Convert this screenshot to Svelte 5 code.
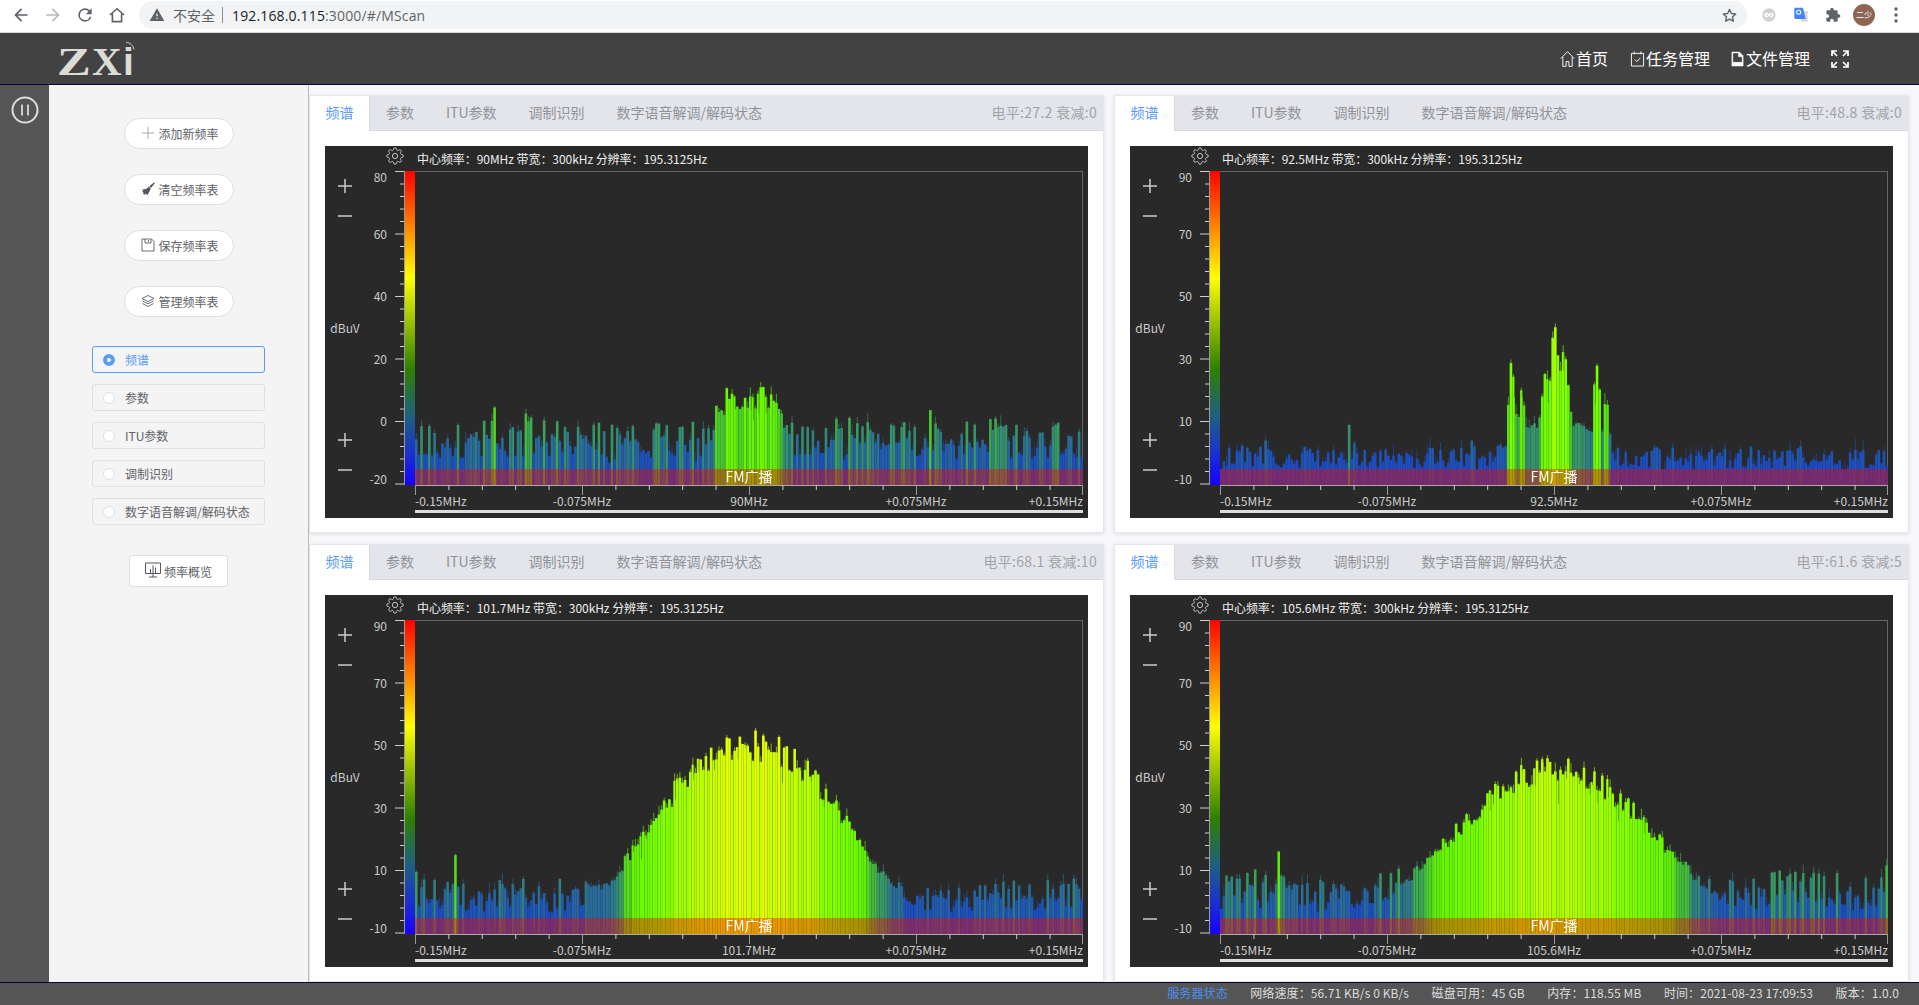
<script>
    const tabs = ["频谱", "参数", "ITU参数", "调制识别", "数字语音解调/解码状态"];

    // one entry per spectrum panel, x and h are in plot pixels
    const charts = [
        {
            center: "90MHz", level: "电平:27.2 衰减:0", info: "中心频率：90MHz 带宽：300kHz 分辨率：195.3125Hz",
            labels: [80, 60, 40, 20, 0, -20], seed: 11, noise: [20, 74], jitter: 0.74,
            peaks: [
                { x: 334, h: 98, w: 39, p: 6 },
                { x: 357, h: 104, w: 2, p: 2 },
                { x: 302, h: 100, w: 2, p: 2 }
            ]
        },
        {
            center: "92.5MHz", level: "电平:48.8 衰减:0", info: "中心频率：92.5MHz 带宽：300kHz 分辨率：195.3125Hz",
            labels: [90, 70, 50, 30, 10, -10], seed: 23, noise: [12, 42], jitter: 0.92,
            peaks: [
                { x: 335, h: 62, w: 62, p: 4 },
                { x: 292, h: 122, w: 6, p: 2 },
                { x: 302, h: 96, w: 6, p: 2 },
                { x: 335, h: 160, w: 8, p: 2 },
                { x: 327, h: 112, w: 11, p: 2 },
                { x: 343, h: 130, w: 11, p: 2 },
                { x: 377, h: 118, w: 6, p: 2 },
                { x: 386, h: 85, w: 6, p: 2 },
                { x: 129, h: 62, w: 1.5, p: 2 },
                { x: 253, h: 62, w: 2, p: 2 }
            ]
        },
        {
            center: "101.7MHz", level: "电平:68.1 衰减:10", info: "中心频率：101.7MHz 带宽：300kHz 分辨率：195.3125Hz",
            labels: [90, 70, 50, 30, 10, -10], seed: 37, noise: [16, 60], jitter: 0.88,
            peaks: [
                { x: 334, h: 196, w: 126, p: 2.4 },
                { x: 41, h: 101, w: 1.3, p: 2 },
                { x: 175, h: 96, w: 1.3, p: 2 },
                { x: 582, h: 95, w: 1.3, p: 2 }
            ]
        },
        {
            center: "105.6MHz", level: "电平:61.6 衰减:5", info: "中心频率：105.6MHz 带宽：300kHz 分辨率：195.3125Hz",
            labels: [90, 70, 50, 30, 10, -10], seed: 51, noise: [18, 70], jitter: 0.88,
            peaks: [
                { x: 334, h: 170, w: 138, p: 2.2 },
                { x: 59, h: 90, w: 1.3, p: 2 },
                { x: 600, h: 93, w: 1.3, p: 2 }
            ]
        }
    ];

    const status = [
        "网络速度：56.71 KB/s 0 KB/s",
        "磁盘可用：45 GB",
        "内存：118.55 MB",
        "时间：2021-08-23 17:09:53",
        "版本：1.0.0"
    ];

    const PLOT_W = 668;
    const PLOT_H = 314;

    const yTicks = Array.from({ length: 26 }, (_, i) => i);
    const xTicks = Array.from({ length: 21 }, (_, i) => i);

    function tickY(i) {
        return Math.min(0.5 + i * 12.5, PLOT_H - 0.5);
    }

    function labelY(i) {
        if (i == 0) return 5.5;
        if (i == 5) return PLOT_H - 7;
        return i * 62.5 - 0.5;
    }

    function tickX(i) {
        return Math.min(0.5 + i * 33.4, PLOT_W - 0.5);
    }

    function random(seed) {
        return function () {
            seed = (seed + 0x6d2b79f5) | 0;
            let t = Math.imul(seed ^ (seed >>> 15), 1 | seed);
            t = (t + Math.imul(t ^ (t >>> 7), 61 | t)) ^ t;
            return ((t ^ (t >>> 14)) >>> 0) / 4294967296;
        };
    }

    const ramp = [
        [0, 24, 66, 200],
        [32, 28, 78, 190],
        [50, 42, 110, 150],
        [72, 68, 190, 55],
        [85, 100, 245, 0],
        [120, 120, 255, 0],
        [150, 155, 255, 0],
        [190, 220, 255, 0],
        [206, 245, 255, 0],
        [260, 255, 180, 0]
    ];

    function colorFor(h, alpha) {
        let i = 0;
        while (i < ramp.length - 2 && h > ramp[i + 1][0]) i++;
        const a = ramp[i];
        const b = ramp[i + 1];
        const t = Math.min(1, Math.max(0, (h - a[0]) / (b[0] - a[0])));
        const c = [1, 2, 3].map((k) => Math.round(a[k] + (b[k] - a[k]) * t));
        return `rgba(${c[0]},${c[1]},${c[2]},${alpha})`;
    }

    function spectrum(canvas, chart) {
        const ctx = canvas.getContext("2d");
        const rnd = random(chart.seed);
        const bins = 256;
        const step = PLOT_W / bins;
        let slow = 0.5;

        for (let b = 0; b < bins; b++) {
            const x = b * step;
            slow = slow * 0.6 + rnd() * 0.4;
            const [lo, hi] = chart.noise;
            let h = lo + (hi - lo) * (0.3 * slow + 0.7 * Math.pow(rnd(), 1.2));
            if (rnd() < 0.07) h += (hi - lo) * 0.2;

            let floor = 0;
            for (const p of chart.peaks) {
                const e = p.h * Math.exp(-Math.pow(Math.abs(x + step / 2 - p.x) / p.w, p.p));
                if (e > floor) floor = e;
            }
            if (floor > h) h = Math.max(h, floor * (chart.jitter + rnd() * (1.04 - chart.jitter)));

            // peak hold sits above the live bar
            const peak = h + rnd() * rnd() * 12;
            ctx.fillStyle = colorFor(h, 0.6);
            ctx.fillRect(x + step * 0.3, PLOT_H - peak, step * 0.4, peak - h);
            ctx.fillStyle = colorFor(h, 1);
            ctx.fillRect(x, PLOT_H - h, step, h);

            if (h > 80 && rnd() < 0.2) {
                ctx.fillStyle = "rgba(20,50,10,0.55)";
                ctx.fillRect(x + step - 0.8, PLOT_H - h, 0.8, rnd() * 24);
            }
        }
    }
</script>

<div class="page">
    <div class="browser">
        <svg class="nav-ico" viewBox="0 0 24 24"><path fill="#5f6368" d="M20 11H7.8l5.6-5.6L12 4l-8 8 8 8 1.4-1.4L7.8 13H20z"/></svg>
        <svg class="nav-ico" viewBox="0 0 24 24"><path fill="#b8babd" d="M4 11h12.2l-5.6-5.6L12 4l8 8-8 8-1.4-1.4 5.6-5.6H4z"/></svg>
        <svg class="nav-ico" viewBox="0 0 24 24"><path fill="#5f6368" d="M17.65 6.35A7.96 7.96 0 0 0 12 4a8 8 0 1 0 7.74 10h-2.08A6 6 0 1 1 12 6c1.66 0 3.14.69 4.22 1.78L13 11h7V4z"/></svg>
        <svg class="nav-ico" viewBox="0 0 24 24"><path fill="none" stroke="#5f6368" stroke-width="2" d="M3.5 12 12 4.5l8.5 7.5M6.5 10.5V20h11v-9.5"/></svg>
        <div class="address">
            <svg class="warn" viewBox="0 0 24 24"><path fill="#5f6368" d="M1 21h22L12 2 1 21zm12-3h-2v-2h2v2zm0-4h-2v-4h2v4z"/></svg>
            <span class="insecure">不安全</span>
            <span class="sep"></span>
            <span class="url"><span class="host">192.168.0.115</span><span class="path">:3000/#/MScan</span></span>
            <svg class="star" viewBox="0 0 24 24"><path fill="none" stroke="#5f6368" stroke-width="2" stroke-linejoin="round" d="m12 3.5 2.6 5.6 6.1.7-4.5 4.2 1.2 6L12 17l-5.4 3 1.2-6-4.5-4.2 6.1-.7z"/></svg>
        </div>
        <div class="exts">
            <svg class="ext" viewBox="0 0 24 24"><circle cx="12" cy="12" r="10" fill="#d2d2d2"/><path fill="none" stroke="#fff" stroke-width="2" d="M12 12c-2-3-6-3-6 0s4 3 6 0 6-3 6 0-4 3-6 0z"/></svg>
            <svg class="ext" viewBox="0 0 24 24"><path fill="#d5d7d9" d="M10 6h12v16H12z"/><path fill="#4285f4" d="M2 1h13l4 17H4a2 2 0 0 1-2-2z"/><circle cx="8.5" cy="8" r="3" fill="none" stroke="#fff" stroke-width="1.6"/></svg>
            <svg class="ext" viewBox="0 0 24 24"><path fill="#5f6368" d="M20.5 11H19V7c0-1.1-.9-2-2-2h-4V3.5C13 2.12 11.88 1 10.5 1S8 2.12 8 3.5V5H4c-1.1 0-1.99.9-1.99 2v3.8H3.5c1.49 0 2.7 1.21 2.7 2.7s-1.21 2.7-2.7 2.7H2V20c0 1.1.9 2 2 2h3.8v-1.5c0-1.49 1.21-2.7 2.7-2.7 1.49 0 2.7 1.21 2.7 2.7V22H17c1.1 0 2-.9 2-2v-4h1.5c1.38 0 2.5-1.12 2.5-2.5S21.88 11 20.5 11z"/></svg>
            <span class="avatar">二少</span>
            <svg class="dots" viewBox="0 0 6 18"><circle cx="3" cy="3" r="1.7"/><circle cx="3" cy="9" r="1.7"/><circle cx="3" cy="15" r="1.7"/></svg>
        </div>
    </div>

    <header class="top">
        <div class="logo">
            <span class="z">Z</span><span class="x">X</span><span class="i">i</span>
            <svg class="wave" viewBox="0 0 12 10"><path fill="none" stroke="#ccc" stroke-width="1" d="M2 1.5c4 0 7 2.500 8 7"/></svg>
        </div>
        <nav>
            <a href="#/">
                <svg viewBox="0 0 16 18"><path fill="none" stroke="#fff" d="M.8 8.5 8 1.2l7.200 7.300M3 7v9.800h3.500v-5h3v5H13V7"/></svg>
                首页
            </a>
            <a href="#/">
                <svg viewBox="0 0 16 18"><path fill="none" stroke="#fff" d="M1.500 3h13v13.500h-13zM4.500 1v3M11.500 1v3M5 9.500l2.200 2.200L11 8"/></svg>
                任务管理
            </a>
            <a href="#/">
                <svg viewBox="0 0 16 18"><path fill="#fff" stroke="#fff" stroke-width="0.5" d="M2 1.500h8l4 4v11H2zM3 2.500v10h10v-6H9v-4z"/></svg>
                文件管理
            </a>
            <svg class="full" viewBox="0 0 18 18"><path fill="none" stroke="#fff" stroke-width="1.700" d="M1 6V1h5M1 1l5 5M12 1h5v5M17 1l-5 5M1 12v5h5M1 17l5-5M12 17h5v-5M17 17l-5-5"/></svg>
        </nav>
    </header>

    <div class="body">
        <div class="rail">
            <svg class="pause" viewBox="0 0 28 28"><circle cx="14" cy="14" r="12.500" fill="none" stroke="#ddd" stroke-width="2"/><path stroke="#ccc" stroke-width="2" d="M11 8.500v11M17 8.500v11"/></svg>
        </div>

        <aside class="side">
            <button class="pill">
                <svg viewBox="0 0 14 14"><path stroke="#a8a8a8" stroke-width="1" d="M7 1v12M1 7h12"/></svg>
                添加新频率
            </button>
            <button class="pill">
                <svg viewBox="0 0 14 14"><path fill="#55575c" d="M13.300.3 14 1 10 6 8.200 4.300zM7.800 4.800l2 2-1.300 2.700L6.500 13 4.800 11.800 3.700 12.800 1.800 11.600 2.800 10.300 1 10 2.500 8.600.3 7.700 3.500 7.200 5.500 6.800z"/></svg>
                清空频率表
            </button>
            <button class="pill">
                <svg viewBox="0 0 14 14"><path fill="none" stroke="#6a6c72" d="M1 1h9.500L13 3.500V13H1zM4 1v4h6V1M7.500 2v2"/></svg>
                保存频率表
            </button>
            <button class="pill">
                <svg viewBox="0 0 14 14"><path fill="none" stroke="#6a6c72" d="M7 1.500 13 4.500 7 7.500 1 4.500zM1.500 7 7 9.800 12.500 7M1.500 9.500 7 12.500 12.500 9.500"/></svg>
                管理频率表
            </button>

            <div class="radios">
                {#each tabs as tab, i}
                    <label class="radio" class:checked={i == 0}>
                        <span class="dot"></span>
                        {tab}
                    </label>
                {/each}
            </div>

            <button class="overview">
                <svg viewBox="0 0 16 16"><path fill="none" stroke="#55575c" d="M.5 1h15v10.500H.5zM8 11.500V15M4 15h8M5.500 7v4M8 3.500V11M10.500 5.500V11"/></svg>
                频率概览
            </button>
        </aside>

        <main class="main">
            {#each charts as chart}
                <section class="panel">
                    <div class="tabs">
                        {#each tabs as tab, i}
                            <span class="tab" class:active={i == 0}>{tab}</span>
                        {/each}
                        <span class="level">{chart.level}</span>
                    </div>

                    <div class="chart">
                        <div class="chart-head">
                            <svg class="gear" viewBox="0 0 24 24">
                                <circle cx="12" cy="12" r="3.500"/>
                                <path d="M19.4 15a1.65 1.65 0 0 0 .33 1.82l.06.06a2 2 0 0 1 0 2.83 2 2 0 0 1-2.83 0l-.06-.06a1.65 1.65 0 0 0-1.82-.33 1.65 1.65 0 0 0-1 1.51V21a2 2 0 0 1-2 2 2 2 0 0 1-2-2v-.09A1.65 1.65 0 0 0 9 19.4a1.65 1.65 0 0 0-1.82.33l-.06.06a2 2 0 0 1-2.83 0 2 2 0 0 1 0-2.83l.06-.06a1.65 1.65 0 0 0 .33-1.82 1.65 1.65 0 0 0-1.51-1H3a2 2 0 0 1-2-2 2 2 0 0 1 2-2h.09A1.65 1.65 0 0 0 4.600 9a1.65 1.65 0 0 0-.33-1.82l-.06-.06a2 2 0 0 1 0-2.83 2 2 0 0 1 2.83 0l.06.06a1.65 1.65 0 0 0 1.82.33H9a1.65 1.65 0 0 0 1-1.51V3a2 2 0 0 1 2-2 2 2 0 0 1 2 2v.09a1.65 1.65 0 0 0 1 1.51 1.65 1.65 0 0 0 1.82-.33l.06-.06a2 2 0 0 1 2.83 0 2 2 0 0 1 0 2.83l-.06.06a1.65 1.65 0 0 0-.33 1.82V9a1.65 1.65 0 0 0 1.51 1H21a2 2 0 0 1 2 2 2 2 0 0 1-2 2h-.09a1.65 1.65 0 0 0-1.51 1z"/>
                            </svg>
                            <span class="info">{chart.info}</span>
                        </div>

                        <div class="chart-mid">
                            <div class="zoomcol">
                                <div class="zoomgroup">
                                    <svg viewBox="0 0 14 14"><path d="M7 0v14M0 7h14"/></svg>
                                    <svg viewBox="0 0 14 14"><path d="M0 7h14"/></svg>
                                </div>
                                <span class="unit">dBuV</span>
                                <div class="zoomgroup">
                                    <svg viewBox="0 0 14 14"><path d="M7 0v14M0 7h14"/></svg>
                                    <svg viewBox="0 0 14 14"><path d="M0 7h14"/></svg>
                                </div>
                            </div>

                            <svg class="yaxis" viewBox="0 0 40 {PLOT_H}">
                                {#each yTicks as i}
                                    <line x1={i % 5 == 0 ? 30 : 35} x2="39" y1={tickY(i)} y2={tickY(i)} />
                                {/each}
                                <line class="axis" x1="39.500" x2="39.500" y1="0" y2={PLOT_H} />
                                {#each chart.labels as label, i}
                                    <text x="22" y={labelY(i)}>{label}</text>
                                {/each}
                            </svg>

                            <div class="colorbar"></div>

                            <div class="plot">
                                <canvas width={PLOT_W} height={PLOT_H} use:spectrum={chart}></canvas>
                                <div class="band">FM广播</div>
                            </div>
                        </div>

                        <svg class="xaxis" viewBox="0 0 {PLOT_W} 25">
                            <line class="base" x1="0" x2={PLOT_W} y1="0.500" y2="0.500" />
                            {#each xTicks as i}
                                <line class:major={i % 5 == 0} x1={tickX(i)} x2={tickX(i)} y1="0" y2={i % 5 == 0 ? 10 : 5} />
                            {/each}
                            <text x="0" y="15" text-anchor="start">-0.15MHz</text>
                            <text x="167" y="15" text-anchor="middle">-0.075MHz</text>
                            <text x="334" y="15" text-anchor="middle">{chart.center}</text>
                            <text x="501" y="15" text-anchor="middle">+0.075MHz</text>
                            <text x={PLOT_W} y="15" text-anchor="end">+0.15MHz</text>
                        </svg>

                        <div class="slider"></div>
                    </div>
                </section>
            {/each}
        </main>
    </div>

    <footer class="status">
        <span class="server">服务器状态</span>
        {#each status as item}
            <span>{item}</span>
        {/each}
    </footer>
</div>

<style>
:global(body) {
    margin: 0;
    font-family: "Noto Sans CJK SC", "Open Sans", sans-serif;
}

.page {
    height: 1005px;
    display: flex;
    flex-direction: column;
    overflow: hidden;
}

/* browser chrome */
.browser {
    height: 33px;
    flex: none;
    box-sizing: border-box;
    border-bottom: 1px solid #d5d6d8;
    background: #fff;
    display: flex;
    align-items: flex-start;
    padding: 1px 0 0 11px;
}

.nav-ico {
    width: 20px;
    height: 20px;
    margin: 4px 12px 0 0;
}

.address {
    width: 1608px;
    height: 28px;
    box-sizing: border-box;
    border-radius: 14px;
    background: #f1f3f4;
    display: flex;
    align-items: center;
    padding-left: 10px;
    font-size: 14px;
    font-family: "Open Sans", "Noto Sans CJK SC", sans-serif;
}

.warn {
    width: 16px;
    height: 16px;
    margin-right: 8px;
}

.insecure {
    color: #5f6368;
}

.sep {
    width: 1px;
    height: 16px;
    background: #8a8d91;
    margin: 0 9px 0 7px;
}

.url {
    letter-spacing: 0.15px;
}

.host {
    color: #202124;
}

.path {
    color: #5f6368;
}

.star {
    width: 17px;
    height: 17px;
    margin-left: auto;
    margin-right: 9px;
}

.exts {
    display: flex;
    align-items: center;
    height: 28px;
    margin-left: 14px;
}

.ext {
    width: 16px;
    height: 16px;
    margin-right: 16px;
}

.avatar {
    width: 22px;
    height: 22px;
    border-radius: 50%;
    background: #8d6654;
    color: #fff;
    font-size: 8px;
    line-height: 22px;
    text-align: center;
    margin-left: -4px;
}

.dots {
    width: 6px;
    height: 18px;
    fill: #5f6368;
    margin-left: 18px;
}

/* app header */
.top {
    height: 52px;
    flex: none;
    box-sizing: border-box;
    border-bottom: 1px solid #05053a;
    background: #424242;
    display: flex;
    justify-content: space-between;
    align-items: center;
    padding: 0 70px 0 57px;
}

.logo {
    position: relative;
    display: flex;
    align-items: flex-end;
    height: 36px;
    margin-top: 3px;
    color: #dcdcd6;
    font-family: "Liberation Serif", serif;
    font-size: 39px;
    line-height: 32px;
}

.logo span {
    display: inline-block;
}

.z {
    font-weight: bold;
    width: 35px;
    transform: scaleX(1.3);
    transform-origin: left;
}

.x {
    font-weight: bold;
    width: 31px;
    transform: scaleX(1.05);
    transform-origin: left;
}

.i {
    font-family: "Liberation Sans", sans-serif;
    font-weight: bold;
}

.wave {
    position: absolute;
    right: -2px;
    top: -1px;
    width: 12px;
    height: 10px;
}

nav {
    display: flex;
    align-items: center;
}

nav a {
    display: flex;
    align-items: center;
    color: #fff;
    font-size: 16px;
    line-height: 22px;
    padding-bottom: 2px;
    text-decoration: none;
    margin-right: 20px;
}

nav a:first-child {
    margin-right: 22px;
}

nav a svg {
    width: 15px;
    height: 18px;
    margin-right: 1px;
    margin-top: 2px;
}

.full {
    width: 18px;
    height: 18px;
    margin-left: 1px;
}

.body {
    flex: 1;
    min-height: 0;
    display: flex;
}

.rail {
    width: 49px;
    flex: none;
    background: #555;
    display: flex;
    justify-content: center;
    align-items: flex-start;
    padding-top: 11px;
}

.pause {
    width: 28px;
    height: 28px;
}

/* left column */
.side {
    width: 260px;
    flex: none;
    box-sizing: border-box;
    border-right: 1px solid #b9b9bc;
    background: #f4f4f5;
    padding-top: 33px;
    display: flex;
    flex-direction: column;
    align-items: center;
    font-size: 12px;
    color: #606266;
}

.pill {
    width: 110px;
    height: 31px;
    box-sizing: border-box;
    margin-bottom: 25px;
    padding: 0 0 0 16px;
    border: 1px solid #dcdfe6;
    border-radius: 16px;
    background: #fff;
    color: #606266;
    font: inherit;
    display: flex;
    align-items: center;
    gap: 4px;
}

.pill svg {
    width: 14px;
    height: 14px;
    margin-top: -2px;
}

.radios {
    margin-top: 4px;
    display: flex;
    flex-direction: column;
    gap: 11px;
}

.radio {
    width: 173px;
    height: 27px;
    box-sizing: border-box;
    border: 1px solid #dcdfe6;
    border-radius: 3px;
    display: flex;
    align-items: center;
    padding-left: 10px;
    gap: 10px;
}

.dot {
    width: 12px;
    height: 12px;
    box-sizing: border-box;
    border: 1px solid #dcdfe6;
    border-radius: 50%;
    background: #fff;
}

.radio.checked {
    border-color: #5a9cf8;
    color: #5a9cf8;
}

.radio.checked .dot {
    border: 4px solid #5a9cf8;
}

.overview {
    width: 99px;
    height: 32px;
    box-sizing: border-box;
    margin-top: 30px;
    padding: 0;
    border: 1px solid #dcdfe6;
    border-radius: 3px;
    background: #fff;
    color: #606266;
    font: inherit;
    display: flex;
    align-items: center;
    justify-content: center;
    gap: 3px;
}

.overview svg {
    width: 16px;
    height: 16px;
    margin-top: -3px;
}

/* panels */
.main {
    flex: 1;
    min-width: 0;
    overflow: hidden;
    background: #f8f8fa;
    box-sizing: border-box;
    padding: 10px 10px 0 0;
    display: grid;
    grid-template-columns: 795px 795px;
    grid-auto-rows: 438px;
    column-gap: 10px;
    row-gap: 11px;
}

.panel {
    box-sizing: border-box;
    background: #fff;
    border: 1px solid #e4e7ed;
    box-shadow: 0 1px 4px rgba(0, 0, 0, 0.12);
}

.tabs {
    height: 35px;
    box-sizing: border-box;
    background: #e4e5ea;
    border-bottom: 1px solid #d8dae0;
    display: flex;
    align-items: center;
    font-size: 14px;
    color: #909399;
}

.tab {
    padding: 0 16px;
    line-height: 32px;
    height: 34px;
}

.tab.active {
    height: 35px;
    box-sizing: border-box;
    padding: 0 15.5px;
    background: #fff;
    color: #5a9cf8;
    border-right: 1px solid #d8dae0;
}

.level {
    margin-left: auto;
    padding-right: 6px;
    padding-bottom: 2px;
    letter-spacing: 0.3px;
    color: #a0a3a8;
}

.chart {
    width: 763px;
    height: 372px;
    margin: 15px 0 0 15px;
    background: #292929;
}

.chart-head {
    height: 25px;
    box-sizing: border-box;
    padding: 1px 0 0 61px;
    display: flex;
    align-items: flex-start;
    gap: 13px;
}

.gear {
    width: 18px;
    height: 18px;
    fill: none;
    stroke: #c4c4c4;
    stroke-width: 1.3;
}

.info {
    margin-top: 4px;
    font-size: 12px;
    line-height: 16px;
    letter-spacing: -0.06px;
    color: #eee;
    white-space: pre;
}

.chart-mid {
    display: flex;
    height: 314px;
}

.zoomcol {
    width: 40px;
    flex: none;
    box-sizing: border-box;
    padding: 8px 0;
    display: flex;
    flex-direction: column;
    align-items: center;
    justify-content: space-between;
}

.zoomgroup {
    display: flex;
    flex-direction: column;
    gap: 16px;
}

.zoomgroup svg {
    display: block;
    width: 14px;
    height: 14px;
    stroke: #ccc;
    stroke-width: 1.5;
}

.unit {
    font-size: 12px;
    line-height: 16px;
    color: #ccc;
}

.yaxis {
    width: 40px;
    height: 314px;
    flex: none;
}

.yaxis line {
    stroke: #cfcfcf;
    stroke-width: 1;
}

.yaxis .axis {
    stroke: #999;
}

.yaxis text {
    fill: #ccc;
    font-size: 12px;
    text-anchor: end;
    dominant-baseline: central;
}

.colorbar {
    width: 10px;
    flex: none;
    background: linear-gradient(#f00 0, #ff0 34%, #2f8000 63%, #1f5f80 78%, #1a30d0 90%, #1800ff 100%);
}

.plot {
    position: relative;
    width: 668px;
    height: 314px;
    flex: none;
}

.plot::before {
    content: "";
    position: absolute;
    inset: 0;
    border-top: 1px solid #666;
    border-right: 1px solid #666;
}

canvas {
    position: relative;
    display: block;
}

.band {
    position: absolute;
    left: 0;
    right: 0;
    bottom: 0;
    height: 16px;
    background: rgba(255, 0, 0, 0.4);
    color: #fff;
    font-size: 14px;
    line-height: 14px;
    text-align: center;
}

.xaxis {
    display: block;
    width: 668px;
    height: 25px;
    margin-left: 90px;
}

.xaxis line {
    stroke: #ccc;
    stroke-width: 1;
}

.xaxis line.major {
    stroke: #999;
}

.xaxis line.base {
    stroke: #aaa;
}

.xaxis text {
    fill: #ccc;
    font-size: 12px;
    dominant-baseline: central;
}

.slider {
    width: 668px;
    height: 3px;
    margin-left: 90px;
    background: #ddd;
}

/* bottom status line */
.status {
    height: 23px;
    flex: none;
    box-sizing: border-box;
    border-top: 1px solid #05053a;
    background: #555;
    color: #ddd;
    font-size: 12px;
    line-height: 16px;
    letter-spacing: 0.1px;
    padding: 0 20px 2px 0;
    display: flex;
    align-items: center;
    justify-content: flex-end;
    gap: 22.5px;
}

.server {
    color: #4a8ff0;
}
</style>
